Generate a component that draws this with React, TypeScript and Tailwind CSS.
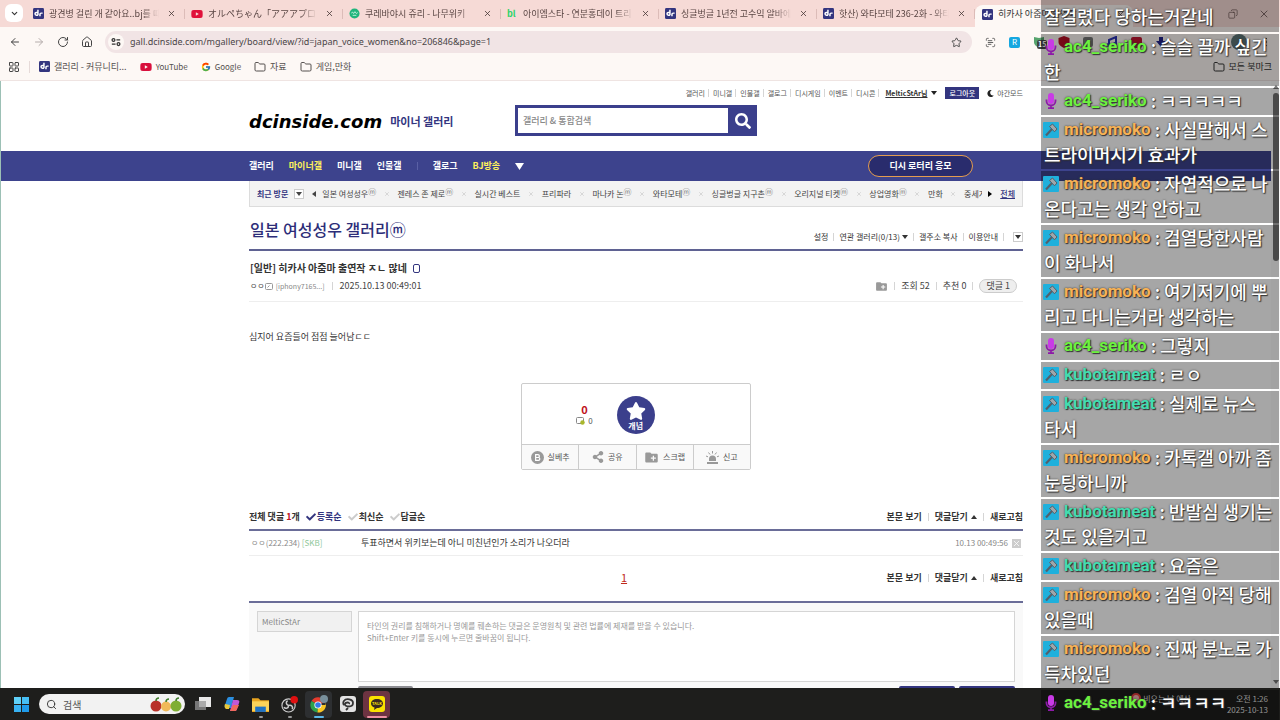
import type { ReactNode } from 'react';
import clsx from 'clsx';
import {
  ArrowLeft,
  ArrowRight,
  ChevronDown,
  Copy,
  Folder,
  House,
  LayoutGrid,
  MoreVertical,
  RotateCw,
  ScanText,
  Search,
  Star,
  X,
} from 'lucide-react';
import { FaCheck, FaMoon, FaSearch, FaShareAlt, FaStar, FaYoutube } from 'react-icons/fa';
import { FcGoogle } from 'react-icons/fc';
import { MdCreateNewFolder } from 'react-icons/md';

type TabIcon = 'dc' | 'youtube' | 'namu' | 'bl';

interface Tab {
  icon: TabIcon;
  title: string;
}

const tabs: Tab[] = [
  { icon: 'dc', title: '광견병 걸린 개 같아요..bj를 때' },
  { icon: 'youtube', title: 'オルペちゃん「アアアプロキシ殿' },
  { icon: 'namu', title: '쿠레바야시 쥬리 - 나무위키' },
  { icon: 'bl', title: '아이엠스타 - 연분홍데이 트리' },
  { icon: 'dc', title: '싱글벙글 1년전 고수익 알바에' },
  { icon: 'dc', title: '핫산) 와타모테 236-2화 - 와타' },
];

const topLinks = ['갤러리', '미니갤', '인물갤', '갤로그', '디시게임', '이벤트', '디시콘'];

const recent = [
  { name: '일본 여성성우', minor: true },
  { name: '젠레스 존 제로', minor: true },
  { name: '실시간 베스트' },
  { name: '프리파라' },
  { name: '마나카 논', minor: true },
  { name: '와타모테', minor: true },
  { name: '싱글벙글 지구촌', minor: true },
  { name: '오리지널 티켓', minor: true },
  { name: '상업영화', minor: true },
  { name: '만화' },
];

interface ChatMessage {
  user: 'ac4_seriko' | 'micromoko' | 'kubotameat';
  lines: string[];
}

const chat: ChatMessage[] = [
  { user: 'ac4_seriko', lines: ['슬슬 끌까 싶긴', '한'] },
  { user: 'ac4_seriko', lines: ['ㅋㅋㅋㅋㅋ'] },
  { user: 'micromoko', lines: ['사실말해서 스', '트라이머시기 효과가'] },
  { user: 'micromoko', lines: ['자연적으로 나', '온다고는 생각 안하고'] },
  { user: 'micromoko', lines: ['검열당한사람', '이 화나서'] },
  { user: 'micromoko', lines: ['여기저기에 뿌', '리고 다니는거라 생각하는'] },
  { user: 'ac4_seriko', lines: ['그렇지'] },
  { user: 'kubotameat', lines: ['ㄹㅇ'] },
  { user: 'kubotameat', lines: ['실제로 뉴스', '타서'] },
  { user: 'micromoko', lines: ['카톡갤 아까 좀', '눈팅하니까'] },
  { user: 'kubotameat', lines: ['반발심 생기는', '것도 있을거고'] },
  { user: 'kubotameat', lines: ['요즘은'] },
  { user: 'micromoko', lines: ['검열 아직 당해', '있을때'] },
  { user: 'micromoko', lines: ['진짜 분노로 가', '득차있던'] },
  { user: 'ac4_seriko', lines: ['ㅋㅋㅋㅋ'] },
];

const userColor = {
  ac4_seriko: 'text-[#6cf23f]',
  micromoko: 'text-[#f7b255]',
  kubotameat: 'text-[#43dcb0]',
};

function DcIcon() {
  return (
    <svg viewBox="0 0 12 12" className="size-[11px] shrink-0" aria-hidden="true">
      <rect width="12" height="12" rx="1.5" fill="#33357f" />
      <path d="M5.4 2v6M5.4 4.800H3.700a1.500 1.500 0 0 0 0 3h1.700M10.500 5.600H8.900a1.300 1.300 0 0 0-1.300 1.300v2" stroke="#fff" strokeWidth="1.600" fill="none" />
    </svg>
  );
}

function Favicon({ icon }: { icon: TabIcon }) {
  if (icon === 'dc') return <DcIcon />;
  if (icon === 'youtube') return <FaYoutube className="size-[12px] shrink-0 text-[#e0103a]" />;
  if (icon === 'namu') {
    return (
      <svg viewBox="0 0 12 12" className="size-[11px] shrink-0" aria-hidden="true">
        <circle cx="6" cy="6" r="5.5" fill="#1fb57c" />
        <path d="M2.5 5.5l1.5-1 1 1.5 1.5-2L8 6l1.5-1M4 8h4" stroke="#c4f2de" fill="none" />
      </svg>
    );
  }
  return <span className="w-[11px] shrink-0 text-[9px] font-bold text-[#2fd36a]">bl</span>;
}

function TabStrip() {
  return (
    <div className="flex h-[27px] bg-[#f6dad6] pl-[5px] text-[#5a4644]">
      <button aria-label="탭 검색" className="mt-1 flex size-[18px] shrink-0 items-center justify-center rounded-md bg-white text-[#333]">
        <ChevronDown size={9} strokeWidth={3} />
      </button>
      <div className="ml-1 flex min-w-0 flex-1">
        {tabs.map((tab) => (
          <div key={tab.title} className="flex h-[27px] w-[158px] shrink-0 items-center pl-[6px]">
            <button className="flex min-w-0 flex-1 items-center gap-[5px] text-left">
              <Favicon icon={tab.icon} />
              <span className="min-w-0 flex-1 overflow-hidden text-[9px] whitespace-nowrap [mask-image:linear-gradient(to_right,black_85%,transparent)]">
                {tab.title}
              </span>
            </button>
            <button aria-label="탭 닫기" className="mr-2 ml-2 text-[#3d2f2e]">
              <X size={9} strokeWidth={2} />
            </button>
            <span className="h-2.5 w-px bg-[#dcbcb8]" />
          </div>
        ))}
        <div className="mt-[5px] flex w-[158px] shrink-0 items-center rounded-t-lg bg-[#fdf8f5] pr-2 pb-1 pl-[7px]">
          <button className="flex min-w-0 flex-1 items-center gap-[5px] text-left">
            <DcIcon />
            <span className="overflow-hidden text-[9px] whitespace-nowrap text-[#333]">히카사 아줌마 출연작</span>
          </button>
          <X size={9} />
        </div>
      </div>
      <div className="flex items-center gap-5 pr-2.5">
        <button aria-label="이전 크기로 복원">
          <Copy size={10} strokeWidth={1.5} className="-scale-x-100" />
        </button>
        <button aria-label="닫기">
          <X size={12} strokeWidth={1.5} />
        </button>
      </div>
    </div>
  );
}

function Extensions() {
  return (
    <div className="ml-[13px] flex w-[295px] items-center gap-[13px] pr-2">
      <ScanText size={11} className="text-[#555]" />
      <span className="flex size-[11px] items-center justify-center rounded-xs bg-[#16a7e0] text-[8px] text-white">R</span>
      <span className="relative size-3">
        <svg viewBox="0 0 12 12" className="size-3" aria-hidden="true">
          <path d="M1 1l5 1 5-1v5c0 3-2.500 4.500-5 6C3.500 10.500 1 9 1 6z" fill="#56a36d" />
        </svg>
        <span className="absolute top-1 left-1 rounded-xs bg-[#444] px-px text-[7px] leading-[9px] font-bold text-white">15</span>
      </span>
      <svg viewBox="0 0 12 12" className="size-3" aria-hidden="true">
        <path d="M6 0l5.500 2v4c0 3-2.500 4.500-5.500 6C3 10.500.5 9 .5 6V2z" fill="#b50f24" />
      </svg>
      <span className="size-[10px] rounded-xs bg-[#777]" />
      <svg viewBox="0 0 12 12" className="size-3" aria-hidden="true">
        <path d="M3 9V4l7-3v7" stroke="#2b34b5" strokeWidth="2" fill="none" />
        <circle cx="2.500" cy="9" r="2" fill="#2b34b5" />
        <circle cx="9" cy="8" r="2" fill="#2b34b5" />
      </svg>
      <span className="size-[11px] rounded-xs bg-[#c01530]" />
      <svg viewBox="0 0 12 12" className="size-3" aria-hidden="true">
        <path d="M4 1h4v4h3l-5 6-5-6h3z" fill="#22248c" />
      </svg>
      <span className="flex-1" />
      <span className="size-4 rounded-full bg-[#5d7475]" />
      <button aria-label="메뉴">
        <MoreVertical size={12} />
      </button>
    </div>
  );
}

function Toolbar() {
  return (
    <div className="border-b border-[#efe4e2] bg-[#fdf8f5] text-[#444]">
      <div className="flex h-[30px] items-center pl-[9px]">
        <div className="flex items-center gap-3">
          <button aria-label="뒤로"><ArrowLeft size={12} /></button>
          <button aria-label="앞으로" className="text-[#b5adac]"><ArrowRight size={12} /></button>
          <button aria-label="새로고침"><RotateCw size={12} /></button>
          <button aria-label="홈"><House size={12} /></button>
        </div>
        <div className="ml-3 flex h-[22px] flex-1 items-center rounded-full bg-[#f1e4e5] pr-2.5 pl-[3px]">
          <span className="flex size-4 items-center justify-center rounded-full bg-[#fdf8f5]">
            <svg viewBox="0 0 12 12" className="size-[10px]" stroke="#333" strokeWidth="1.500" fill="none" aria-hidden="true">
              <circle cx="3" cy="3.500" r="1.700" />
              <path d="M6.500 3.500H11M1 8.500h4.500" />
              <circle cx="9" cy="8.500" r="1.700" />
            </svg>
          </span>
          <input
            aria-label="주소창"
            readOnly
            value="gall.dcinside.com/mgallery/board/view/?id=japan_voice_women&no=206846&page=1"
            className="ml-1.5 min-w-0 flex-1 bg-transparent font-['Noto_Sans',sans-serif] text-[9px] text-[#4a4547] outline-none"
          />
          <button aria-label="북마크 추가"><Star size={11} /></button>
        </div>
        <Extensions />
      </div>
      <div className="flex h-[23px] items-center pr-2 pb-1 pl-2 text-[9px] text-[#55504f]">
        <LayoutGrid size={12} className="text-[#444]" />
        <span className="mx-[9px] h-3 w-px bg-[#e6dad8]" />
        <div className="flex items-center gap-[13px]">
          <a href="#community" className="flex items-center gap-1"><DcIcon />갤러리 - 커뮤니티...</a>
          <a href="#youtube" className="flex items-center gap-1 text-[8px]"><FaYoutube size={12} className="text-[#d80f3c]" />YouTube</a>
          <a href="#google" className="flex items-center gap-1 text-[8px]"><FcGoogle size={10} />Google</a>
          <a href="#data" className="flex items-center gap-1"><Folder size={12} />자료</a>
          <a href="#game" className="flex items-center gap-1"><Folder size={12} />게임,만화</a>
        </div>
        <a href="#all" className="ml-auto flex items-center gap-1 text-[#333]"><Folder size={12} />모든 북마크</a>
      </div>
    </div>
  );
}

function Caret({ up = false, className = '' }: { up?: boolean; className?: string }) {
  return (
    <svg viewBox="0 0 6 4" className={clsx('inline-block h-1 w-1.5 shrink-0', className)} aria-hidden="true">
      <path d={up ? 'M0 4h6L3 0z' : 'M0 0h6L3 4z'} fill="currentColor" />
    </svg>
  );
}

function Divider() {
  return <span className="h-2 w-px shrink-0 bg-[#d5d5d5]" />;
}

function SiteHeader() {
  return (
    <header>
      <div className="mx-auto max-w-[774px] pt-1.5 pb-[15px]">
        <div className="flex h-3 items-center justify-end gap-1 text-[7px] text-[#555]">
          {topLinks.map((link) => (
            <span key={link} className="flex items-center gap-[3px]">
              <a href="#top">{link}</a>
              <Divider />
            </span>
          ))}
          <a href="#me" className="ml-0.5 font-bold text-[#333] underline">MelticStAr님</a>
          <Caret className="text-[#222]" />
          <button className="ml-1 bg-[#33357f] px-1 leading-3 font-medium text-white">로그아웃</button>
          <button className="ml-1 flex items-center gap-[3px]">
            <FaMoon size={7} className="text-[#222]" />
            야간모드
          </button>
        </div>
        <div className="mt-1.5 flex h-[31px] items-center">
          <a href="#home" className="pt-0.5 font-['DejaVu_Sans',sans-serif] text-[18px] font-bold text-black italic">dcinside.com</a>
          <a href="#minor" className="ml-2 pt-0.5 text-[11px] font-bold text-[#33357f]">마이너 갤러리</a>
          <form className="mr-[266px] ml-auto flex h-full w-[242px] border-[3px] border-r-0 border-[#3b3f8c]">
            <input
              aria-label="검색"
              placeholder="갤러리 & 통합검색"
              className="min-w-0 flex-1 px-[5px] text-[9px] font-medium outline-none placeholder:text-[#888]"
            />
            <button type="button" aria-label="검색" className="-my-[3px] flex w-[29px] items-center justify-center bg-[#3b3f8c] text-white">
              <FaSearch size={16} />
            </button>
          </form>
        </div>
      </div>
      <nav className="bg-[#3d438d]">
        <div className="mx-auto flex h-[30px] max-w-[774px] items-center gap-[15px] text-[9px] font-bold text-white">
          <a href="#g">갤러리</a>
          <a href="#m" className="text-[#fff15c]">마이너갤</a>
          <a href="#mini">미니갤</a>
          <a href="#p">인물갤</a>
          <span className="h-2 w-px bg-[#5a60a5]" />
          <a href="#log">갤로그</a>
          <a href="#bj" className="text-[#fff15c]">BJ방송</a>
          <button aria-label="더보기">
            <svg viewBox="0 0 9 7" className="h-[7px] w-[9px]" aria-hidden="true">
              <path d="M0 0h9L4.500 7z" fill="#fff" />
            </svg>
          </button>
          <a
            href="#lottery"
            className="mr-[50px] ml-auto flex h-[22px] w-[105px] items-center justify-center rounded-full border border-[#e39c50] bg-[#292c6d]"
          >
            디시 로터리 응모
          </a>
        </div>
      </nav>
    </header>
  );
}

function RecentBar() {
  return (
    <div className="flex h-[26px] items-center border border-t-0 border-[#dcdcdc] bg-[#f3f3f3] px-[7px] text-[8px] text-[#444]">
      <strong className="text-[#33357f]">최근 방문</strong>
      <button aria-label="최근 방문 목록" className="ml-1.5 flex size-[10px] items-center justify-center border border-[#ccc] bg-white">
        <Caret />
      </button>
      <button aria-label="이전" className="mr-1 ml-2 rotate-90"><Caret /></button>
      <div className="flex min-w-0 flex-1 items-center justify-between">
        {recent.map((item) => (
          <span key={item.name} className="contents">
            <a href="#gallery" className="flex whitespace-nowrap">
              {item.name}
              {item.minor && <span className="-mt-0.5 text-[#777]">ⓜ</span>}
            </a>
            <button aria-label="삭제" className="text-[#bbb]"><X size={6} /></button>
          </span>
        ))}
        <a href="#gallery" className="w-[18px] overflow-hidden whitespace-nowrap">중세게임</a>
      </div>
      <button aria-label="다음" className="mx-1 -rotate-90 text-black"><Caret /></button>
      <a href="#all" className="ml-1 font-medium text-[#33357f] underline">전체</a>
    </div>
  );
}

function CommentLinks() {
  return (
    <div className="flex items-center gap-1.5 text-[9px] font-bold text-[#333]">
      <a href="#body">본문 보기</a>
      <Divider />
      <button className="flex items-center gap-[3px]">댓글닫기 <Caret up /></button>
      <Divider />
      <button>새로고침</button>
    </div>
  );
}

function ActionButton({ icon, children }: { icon: ReactNode; children: ReactNode }) {
  return (
    <button className="flex flex-1 items-center justify-center gap-1 border-l border-[#ccc] text-[8px] text-[#555] first:border-l-0">
      <span className="text-[#999]">{icon}</span>
      {children}
    </button>
  );
}

function VoteBox() {
  return (
    <div className="mx-auto mt-[37px] w-[230px] rounded-xs border border-[#ccc]">
      <div className="flex h-[60px] items-center justify-center gap-6 pt-0.5 pr-[41px]">
        <div className="text-center">
          <p className="text-[11px] leading-3 font-bold text-[#c00f1c]">0</p>
          <p className="flex items-center gap-[3px] text-[8px] leading-3 text-[#555]">
            <svg viewBox="0 0 9 8" className="h-2 w-[9px]" aria-hidden="true">
              <rect x=".5" y=".5" width="7" height="6" rx="1" fill="#fff" stroke="#888" />
              <circle cx="6.500" cy="5.500" r="2.200" fill="#a9b72c" />
            </svg>
            0
          </p>
        </div>
        <button className="flex size-[38px] flex-col items-center justify-center rounded-full bg-[#3b3f8c] text-[8px] leading-[9px] font-bold text-white">
          <FaStar size={20} />
          개념
        </button>
      </div>
      <div className="flex h-[25px] border-t border-[#ccc] bg-[#f9f9f9]">
        <ActionButton
          icon={
            <svg viewBox="0 0 14 14" className="size-[13px]" aria-hidden="true">
              <circle cx="7" cy="7" r="7" fill="#999" />
              <path d="M5 4h2.500a1.500 1.500 0 0 1 0 3H5zM5 7h3a1.500 1.500 0 0 1 0 3H5z" stroke="#fff" strokeWidth="1.300" fill="none" />
            </svg>
          }
        >
          실베추
        </ActionButton>
        <ActionButton icon={<FaShareAlt size={12} />}>공유</ActionButton>
        <ActionButton icon={<MdCreateNewFolder size={15} />}>스크랩</ActionButton>
        <ActionButton
          icon={
            <svg viewBox="0 0 13 13" className="size-[13px]" aria-hidden="true">
              <path d="M3 10V8a3.500 3.500 0 0 1 7 0v2zM1 11h11v2H1z" fill="#999" />
              <path d="M6.500 0v2.500M2.500 1.500l1.500 2M10.500 1.500L9 3.500M0 5l2 .8M13 5l-2 .8" stroke="#999" fill="none" />
            </svg>
          }
        >
          신고
        </ActionButton>
      </div>
    </div>
  );
}

function Article() {
  return (
    <article>
      <div className="flex h-[44px] items-end border-b-2 border-[#5f6292] pl-px">
        <h1 className="flex items-center pb-2 text-[16px] leading-6 font-medium text-[#2d2d78]">일본 여성성우 갤러리ⓜ</h1>
        <div className="ml-auto flex items-center gap-[5px] pb-1.5 text-[8px] text-[#333]">
          <button>설정</button>
          <Divider />
          <button className="flex items-center gap-0.5">연관 갤러리(0/13) <Caret /></button>
          <Divider />
          <button>갤주소 복사</button>
          <Divider />
          <a href="#guide">이용안내</a>
          <Divider />
          <button aria-label="펼치기" className="ml-1 flex size-[10px] items-center justify-center border border-[#ccc]"><Caret /></button>
        </div>
      </div>
      <div className="border-b border-[#eee] px-px pt-2 pb-1.5 leading-[18px]">
        <h2 className="flex items-center gap-1.5 text-[10px] font-bold text-[#333]">
          [일반] 히카사 아줌마 출연작 ㅈㄴ 많네
          <span className="h-[9px] w-[7px] rounded-xs border border-[#33357f]" />
        </h2>
        <div className="flex items-center gap-[7px] text-[9px] text-[#444]">
          <div className="flex items-center gap-[3px]">
            <span className="flex items-center text-[8px]">
              ㅇㅇ
              <svg viewBox="0 0 8 7" className="h-[7px] w-2" aria-hidden="true">
                <rect x=".5" y=".5" width="7" height="6" rx="1" fill="#fff" stroke="#999" />
                <path d="M2.500 4.500l2-2" stroke="#999" />
              </svg>
            </span>
            <span className="text-[7px] text-[#888]">[iphony7165...]</span>
          </div>
          <Divider />
          <time>2025.10.13 00:49:01</time>
          <div className="ml-auto flex items-center gap-1.5 pr-[5px]">
            <MdCreateNewFolder size={13} className="text-[#999]" />
            <Divider />
            <span>조회 52</span>
            <Divider />
            <span>추천 0</span>
            <Divider />
            <button className="rounded-full border border-[#ccc] bg-[#eee] px-1.5 leading-3">댓글 1</button>
          </div>
        </div>
      </div>
      <p className="mt-[26px] text-[9px] leading-[18px] text-[#333]">심지어 요즘들어 점점 늘어남ㄷㄷ</p>
      <VoteBox />
    </article>
  );
}

function Comments() {
  return (
    <section className="mt-[38px]">
      <div className="flex items-center justify-between border-b-2 border-[#6a6d98] pb-[3px] leading-[18px]">
        <div className="flex items-center gap-1.5 text-[9px] font-bold text-[#333]">
          <span>전체 댓글 <em className="text-[#c00f1c] not-italic">1</em>개</span>
          <button className="flex items-center gap-px text-[#33357f]"><FaCheck size={10} />등록순</button>
          <button className="flex items-center gap-px"><FaCheck size={10} className="text-[#ccc]" />최신순</button>
          <button className="flex items-center gap-px"><FaCheck size={10} className="text-[#ccc]" />답글순</button>
        </div>
        <CommentLinks />
      </div>
      <ul>
        <li className="flex h-[25px] items-center border-b border-[#eee] pl-0.5 text-[9px] text-[#333]">
          <span className="w-[110px] text-[8px] text-[#888]">ㅇㅇ(222.234) <span className="text-[#8fc79a]">[SKB]</span></span>
          <p>투표하면서 위키보는데 아니 미친년인가 소리가 나오더라</p>
          <time className="ml-auto text-[8px] text-[#888]">10.13 00:49:56</time>
          <button aria-label="댓글 삭제" className="mr-0.5 ml-1 bg-[#ccc] text-white"><X size={9} /></button>
        </li>
      </ul>
      <div className="flex h-[45px] items-center pb-0.5">
        <span className="flex-1" />
        <a href="#page1" className="text-[11px] text-[#c02a1c] underline">1</a>
        <div className="flex flex-1 justify-end pl-6"><CommentLinks /></div>
      </div>
      <form className="border-t-2 border-[#6a6d98] bg-[#f9f9f9] px-2 pt-2">
        <div className="flex gap-1.5">
          <input
            aria-label="닉네임"
            readOnly
            value="MelticStAr"
            className="h-[21px] w-[95px] border border-[#d5d5d5] bg-[#f1f1f1] px-1 text-[8px] text-[#888] outline-none"
          />
          <textarea
            aria-label="댓글"
            placeholder={'타인의 권리를 침해하거나 명예를 훼손하는 댓글은 운영원칙 및 관련 법률에 제재를 받을 수 있습니다.\nShift+Enter 키를 동시에 누르면 줄바꿈이 됩니다.'}
            className="h-[71px] flex-1 resize-none border border-[#d5d5d5] bg-white px-2 py-2 text-[8px] leading-3 outline-none placeholder:text-[#999]"
          />
        </div>
        <div className="mt-1 flex gap-1 pl-[101px]">
          <button type="button" aria-label="디시콘" className="h-6 w-[55px] rounded-xs bg-[#8b8b90]" />
          <button type="button" aria-label="등록" className="ml-auto h-6 w-14 rounded-xs bg-[#33357f]" />
          <button type="button" aria-label="등록+추천" className="h-6 w-14 rounded-xs bg-[#33357f]" />
        </div>
      </form>
    </section>
  );
}

function MicIcon() {
  return (
    <svg viewBox="0 0 16 16" className="size-4 shrink-0" aria-hidden="true">
      <path d="M3.500 6.500v1.500a4.500 4.500 0 0 0 9 0V6.500M8 12.500v2.500M5 15.200h6" stroke="#8d1aa8" strokeWidth="1.800" fill="none" />
      <rect x="5" y="0" width="6" height="11" rx="3" fill="#c93be6" />
    </svg>
  );
}

function HammerIcon() {
  return (
    <svg viewBox="0 0 16 16" className="size-4 shrink-0" aria-hidden="true">
      <rect width="16" height="16" rx="1" fill="#1fb0dc" />
      <path d="M3 13.500L9 7" stroke="#52606b" strokeWidth="2.200" />
      <path d="M6.500 4.500l3-2.500 4.500 5-2.500 2.800z" fill="#9fa6aa" stroke="#52606b" />
    </svg>
  );
}

function ChatOverlay() {
  return (
    <aside className="absolute top-0 right-px bottom-0 flex w-[238px] flex-col gap-0.5 overflow-hidden text-[18px] leading-[25px] font-medium whitespace-nowrap text-white [text-shadow:0_0_2px_#333,1px_1px_1px_#333]">
      <div className="shrink-0 bg-black/35 px-[3px] pt-1 pb-[3px]">잘걸렸다 당하는거같네</div>
      {chat.map((msg, i) => (
        <div key={i} className={clsx('shrink-0 bg-black/35 pr-1 pb-0.5 pl-[3px]', i === chat.length - 1 && 'flex-1')}>
          <div className="flex h-[25px] items-center">
            <span className="-ml-px mr-[5px]">{msg.user === 'ac4_seriko' ? <MicIcon /> : <HammerIcon />}</span>
            <b className={clsx("font-['Roboto',sans-serif] text-[17px] font-bold", userColor[msg.user])}>{msg.user}</b>
            <span className="whitespace-pre">{` : ${msg.lines[0]}`}</span>
          </div>
          {msg.lines[1] && <p>{msg.lines[1]}</p>}
        </div>
      ))}
    </aside>
  );
}

function TaskItem({ children, className = '', label }: { children: ReactNode; className?: string; label: string }) {
  return (
    <button aria-label={label} className={clsx('relative flex h-[27px] w-[27px] items-center justify-center rounded-sm', className)}>
      {children}
    </button>
  );
}

function Taskbar() {
  return (
    <footer className="flex h-8 shrink-0 items-center bg-[#1e1e1c] pl-[14px]">
      <button aria-label="시작" className="grid grid-cols-2 gap-px">
        <span className="size-[7px] bg-[#5fd0f8]" />
        <span className="size-[7px] bg-[#46bff5]" />
        <span className="size-[7px] bg-[#38b2f2]" />
        <span className="size-[7px] bg-[#1f9bea]" />
      </button>
      <label className="ml-2.5 flex h-5 w-[146px] items-center rounded-full bg-[#f2f2f2] pr-[3px] pl-[7px] text-[#333]">
        <Search size={11} />
        <input placeholder="검색" className="ml-1.5 w-[70px] text-[10px] outline-none placeholder:text-[#555]" />
        <svg viewBox="0 0 32 15" className="ml-auto h-[15px] w-8 shrink-0" aria-hidden="true">
          <circle cx="6" cy="9" r="5.500" fill="#b8322a" />
          <circle cx="16" cy="9.500" r="5" fill="#f0b95a" />
          <circle cx="26" cy="9" r="5.500" fill="#7fae35" />
          <path d="M6 4c0-2 1-3 3-3M16 5c0-2 1-3 3-3M26 4c0-2 1-3 3-3" stroke="#3f7d2c" strokeWidth="1.500" fill="none" />
        </svg>
      </label>
      <div className="ml-1 flex items-center gap-0.5">
        <TaskItem label="작업 보기">
          <svg viewBox="0 0 16 16" className="size-4" aria-hidden="true">
            <rect x="4" y="1" width="12" height="10" fill="#e8e8e8" />
            <rect x="0" y="5" width="11" height="9" fill="#777" />
            <rect x="4" y="5" width="7" height="6" fill="#aaa" />
          </svg>
        </TaskItem>
        <TaskItem label="Copilot">
          <svg viewBox="0 0 16 16" className="size-4" aria-hidden="true">
            <path d="M5 1h5l-3 11H3c-2 0-3-1-2-3l2-6c.4-1.300 1-2 2-2z" fill="#2b8fe0" />
            <path d="M1 8l5 1-1 4H3c-2 0-3-2-2-5z" fill="#e8c83a" />
            <path d="M11 15H6L9 4h4c2 0 3 1 2 3l-2 6c-.4 1.300-1 2-2 2z" fill="#c258d8" />
            <path d="M9 9h6l-2 4c-.5 1.500-1 2-2 2H6z" fill="#f0695c" />
          </svg>
        </TaskItem>
        <TaskItem label="파일 탐색기">
          <svg viewBox="0 0 16 16" className="size-[17px]" aria-hidden="true">
            <path d="M0 2h6l2 2h8v11H0z" fill="#e9a520" />
            <path d="M0 5h16v9H0z" fill="#fbd35a" />
            <path d="M3 10h10v5H3z" fill="#1f72c4" />
          </svg>
          <span className="absolute bottom-0 h-0.5 w-1 rounded-full bg-[#999]" />
        </TaskItem>
        <TaskItem label="OBS Studio">
          <svg viewBox="0 0 18 18" className="size-[17px]" aria-hidden="true">
            <circle cx="8" cy="10" r="7" fill="#222" stroke="#ccc" strokeWidth="1.200" />
            <path d="M8 10c-3-1-3-4-1-5M8 10c3-1 5 1 4 4M8 10c0 3-3 4-5 2" stroke="#ccc" strokeWidth="1.600" fill="none" />
            <circle cx="14" cy="4" r="4" fill="#e01010" />
          </svg>
          <span className="absolute bottom-0 h-0.5 w-1 rounded-full bg-[#999]" />
        </TaskItem>
        <TaskItem label="Chrome" className="bg-[#2d2f31]">
          <svg viewBox="0 0 18 18" className="size-[18px]" aria-hidden="true">
            <path d="M8 10L1.500 6A7.500 7.500 0 0 1 15 7z" fill="#e33b2e" />
            <path d="M8 10L1.500 6a7.500 7.500 0 0 0 6 11.500z" fill="#2da14c" />
            <path d="M8 10h7.500V7.500A7.500 7.500 0 0 1 7.500 17.500z" fill="#f9c623" />
            <circle cx="8" cy="10" r="3.600" fill="#fff" />
            <circle cx="8" cy="10" r="2.800" fill="#3579e6" />
            <circle cx="14" cy="4" r="4" fill="#78909c" />
          </svg>
          <span className="absolute bottom-0 h-0.5 w-2.5 rounded-full bg-[#5bb8ea]" />
        </TaskItem>
        <TaskItem label="Clip Studio">
          <svg viewBox="0 0 16 16" className="size-4" aria-hidden="true">
            <rect width="16" height="16" rx="3" fill="#e2e2e2" />
            <path d="M4 5c2-3 9-2 9 2 0 5-9 4-8 1 .5-2 5-2 4 0M8 12l-2 2M4 5c-1 1-1 3 0 4" stroke="#333" strokeWidth="1.800" fill="none" />
          </svg>
        </TaskItem>
        <TaskItem label="카카오톡" className="bg-[#6d3341]">
          <svg viewBox="0 0 16 16" className="size-4" aria-hidden="true">
            <rect width="16" height="16" rx="3" fill="#fae100" />
            <path d="M8 3c3.500 0 6 2 6 4.500S11.500 12 8 12l-3 2 .5-2.500C3.500 11 2 9.500 2 7.500 2 5 4.500 3 8 3z" fill="#3a2a20" />
            <text x="8" y="9" fontSize="4" fontWeight="bold" fill="#fae100" textAnchor="middle">TALK</text>
          </svg>
          <span className="absolute bottom-0 h-0.5 w-5 rounded-full bg-[#ee8fa3]" />
        </TaskItem>
      </div>
      <div className="ml-auto flex items-center pr-3 text-[8px] leading-[11px] text-[#ddd]">
        <span className="mr-0.5 mb-3 size-2.5 rounded-full border-2 border-[#e23b3b] bg-[#f3b0b0]" />
        <span className="mr-9 pb-3">비오는 날 예상</span>
        <div className="text-right">
          <p>오전 1:26</p>
          <p>2025-10-13</p>
        </div>
      </div>
    </footer>
  );
}

export default function App() {
  return (
    <div className="relative flex h-screen flex-col overflow-hidden bg-white font-['Noto_Sans_CJK_KR','Noto_Sans_CJK_JP',sans-serif]">
      <TabStrip />
      <Toolbar />
      <div className="flex min-h-0 flex-1">
        <main className="min-w-0 flex-1 overflow-hidden border-l border-[#9cc0b5]">
          <SiteHeader />
          <div className="mx-auto max-w-[774px]">
            <RecentBar />
            <Article />
            <Comments />
          </div>
        </main>
        <div className="flex w-[9px] flex-col items-center bg-[#fafafa] py-1 text-[#777]">
          <Caret up />
          <span className="mt-1 h-[168px] w-1.5 rounded-full bg-[#707070]" />
          <Caret className="mt-auto" />
        </div>
      </div>
      <Taskbar />
      <ChatOverlay />
    </div>
  );
}
